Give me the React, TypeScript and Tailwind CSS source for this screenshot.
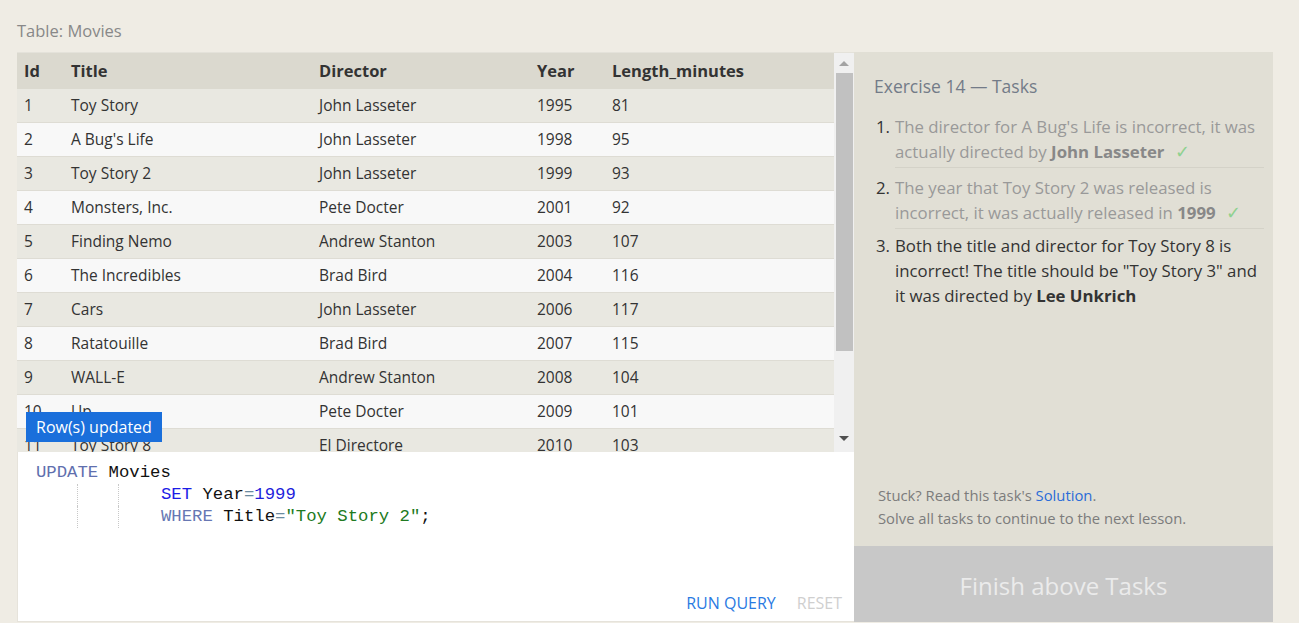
import React from 'react'

type Movie = { id: number; title: string; director: string; year: number; length: number }

const movies: Movie[] = [
  { id: 1, title: 'Toy Story', director: 'John Lasseter', year: 1995, length: 81 },
  { id: 2, title: "A Bug's Life", director: 'John Lasseter', year: 1998, length: 95 },
  { id: 3, title: 'Toy Story 2', director: 'John Lasseter', year: 1999, length: 93 },
  { id: 4, title: 'Monsters, Inc.', director: 'Pete Docter', year: 2001, length: 92 },
  { id: 5, title: 'Finding Nemo', director: 'Andrew Stanton', year: 2003, length: 107 },
  { id: 6, title: 'The Incredibles', director: 'Brad Bird', year: 2004, length: 116 },
  { id: 7, title: 'Cars', director: 'John Lasseter', year: 2006, length: 117 },
  { id: 8, title: 'Ratatouille', director: 'Brad Bird', year: 2007, length: 115 },
  { id: 9, title: 'WALL-E', director: 'Andrew Stanton', year: 2008, length: 104 },
  { id: 10, title: 'Up', director: 'Pete Docter', year: 2009, length: 101 },
  { id: 11, title: 'Toy Story 8', director: 'El Directore', year: 2010, length: 103 },
  { id: 12, title: 'Cars 2', director: 'John Lasseter', year: 2011, length: 120 },
]

const Row = ({ m, odd }: { m: Movie; odd: boolean }) => (
  <div
    className={`flex h-[34px] shrink-0 items-center border-b border-[#dedcd4] text-[15.5px] text-[#333] ${
      odd ? 'bg-[#e9e8e1]' : 'bg-[#f8f8f8]'
    }`}
  >
    <div className="w-[54px] pl-[7px]">{m.id}</div>
    <div className="w-[248px]">{m.title}</div>
    <div className="w-[218px]">{m.director}</div>
    <div className="w-[75px]">{m.year}</div>
    <div className="flex-1">{m.length}</div>
  </div>
)

const Scrollbar = () => (
  <div className="flex w-[20px] shrink-0 flex-col items-center bg-[#f0f0f0]">
    <div className="flex h-[20px] w-full items-center justify-center">
      <div className="h-0 w-0 border-x-[5px] border-b-[5px] border-x-transparent border-b-[#a3a3a3]" />
    </div>
    <div className="ml-[1px] h-[278px] w-[17px] bg-[#c1c1c1]" />
    <div className="flex-1" />
    <div className="flex h-[28px] w-full items-center justify-center">
      <div className="h-0 w-0 border-x-[5px] border-t-[5px] border-x-transparent border-t-[#505050]" />
    </div>
  </div>
)

const Check = () => <span className="ml-[10px] text-[18px] font-normal leading-[20px] text-[#8fd18f]">✓</span>

export default function App() {
  return (
    <div
      className="min-h-[623px] w-[1299px] bg-[#efece4] text-[15px]"
      style={{ fontFamily: '"Open Sans", "Noto Sans", sans-serif' }}
    >
      <div className="pl-[17px] pt-[19px] text-[16.5px] leading-[24px] text-[#888]">Table: Movies</div>
      <div className="mt-[9px] flex pl-[17px]">
        {/* left: table + editor */}
        <div className="flex w-[837px] flex-col">
          <div className="relative flex h-[400px] border-t border-[#e4e2da]">
            <div className="flex flex-1 flex-col overflow-hidden">
              <div className="flex h-[36px] shrink-0 items-center bg-[#dbd9cf] text-[16.5px] font-bold text-[#333]">
                <div className="w-[54px] pl-[7px]">Id</div>
                <div className="w-[248px]">Title</div>
                <div className="w-[218px]">Director</div>
                <div className="w-[75px]">Year</div>
                <div className="flex-1">Length_minutes</div>
              </div>
              {movies.map((m, i) => (
                <Row key={m.id} m={m} odd={i % 2 === 0} />
              ))}
            </div>
            <Scrollbar />
            <div className="absolute left-[9px] top-[359px] bg-[#1a6fdb] px-[10px] py-[3px] text-[16px] leading-[24px] text-white">
              Row(s) updated
            </div>
          </div>
          <div className="flex h-[170px] flex-col border-b border-l border-[#e6e3db] bg-white">
            <div
              className="flex-1 pl-[18px] pt-[10px] text-[17.3px] leading-[22px] text-[#111]"
              style={{ fontFamily: '"Liberation Mono", "DejaVu Sans Mono", monospace' }}
            >
              <div>
                <span className="text-[#5f6fae]">UPDATE</span> Movies
              </div>
              <div className="flex">
                <span className="w-[42px] border-r border-dotted border-[#c8c8c8]" />
                <span className="w-[41px] border-r border-dotted border-[#c8c8c8]" />
                <span className="w-[42px]" />
                <span>
                  <span className="text-[#1c1ce6]">SET</span> Year<span className="text-[#6a8aa0]">=</span>
                  <span className="text-[#1f1fdc]">1999</span>
                </span>
              </div>
              <div className="flex">
                <span className="w-[42px] border-r border-dotted border-[#c8c8c8]" />
                <span className="w-[41px] border-r border-dotted border-[#c8c8c8]" />
                <span className="w-[42px]" />
                <span>
                  <span className="text-[#6777b3]">WHERE</span> Title<span className="text-[#6a8aa0]">=</span>
                  <span className="text-[#217a21]">"Toy Story 2"</span>;
                </span>
              </div>
            </div>
            <div className="flex justify-end gap-[21px] pb-[8px] pr-[12px] text-[16px] leading-[20px]">
              <span className="text-[#2a7ae2]">RUN QUERY</span>
              <span className="text-[#cfcfcf]">RESET</span>
            </div>
          </div>
        </div>

        {/* right: tasks */}
        <div className="flex w-[419px] flex-col">
          <div className="flex h-[494px] flex-col bg-[#e1dfd5] pl-[20px] pr-[9px]">
            <div className="pt-[22px] text-[17.5px] leading-[24px] text-[#737b88]">Exercise 14 — Tasks</div>
            <ol className="mt-[16px] pl-[2px] text-[16.8px] leading-[25px]">
              <li className="flex">
                <span className="w-[19px] shrink-0 text-[#333]">1.</span>
                <div className="flex-1 border-b border-[#d4d2c8] pb-[3px] text-[#999]">
                  The director for A Bug's Life is incorrect, it was actually directed by{' '}
                  <b className="text-[#888]">John Lasseter</b>
                  <Check />
                </div>
              </li>
              <li className="mt-[7px] flex">
                <span className="w-[19px] shrink-0 text-[#333]">2.</span>
                <div className="flex-1 border-b border-[#d4d2c8] pb-[3px] text-[#999]">
                  The year that Toy Story 2 was released is incorrect, it was actually released in{' '}
                  <b className="text-[#888]">1999</b>
                  <Check />
                </div>
              </li>
              <li className="mt-[4px] flex">
                <span className="w-[19px] shrink-0 text-[#333]">3.</span>
                <div className="flex-1 text-[#333]">
                  Both the title and director for Toy Story 8 is incorrect! The title should be "Toy Story 3" and
                  it was directed by <b>Lee Unkrich</b>
                </div>
              </li>
            </ol>
            <div className="flex-1" />
            <div className="pb-[16px] pl-[4px] text-[14.8px] leading-[23px] text-[#7c7c7c]">
              <div>
                Stuck? Read this task's <span className="text-[#2a6cd8]">Solution</span>.
              </div>
              <div>Solve all tasks to continue to the next lesson.</div>
            </div>
          </div>
          <div className="flex h-[76px] items-center justify-center bg-[#c8c8c8] pt-[4px] text-[24px] text-[#ebebeb]">
            Finish above Tasks
          </div>
        </div>
      </div>
    </div>
  )
}
